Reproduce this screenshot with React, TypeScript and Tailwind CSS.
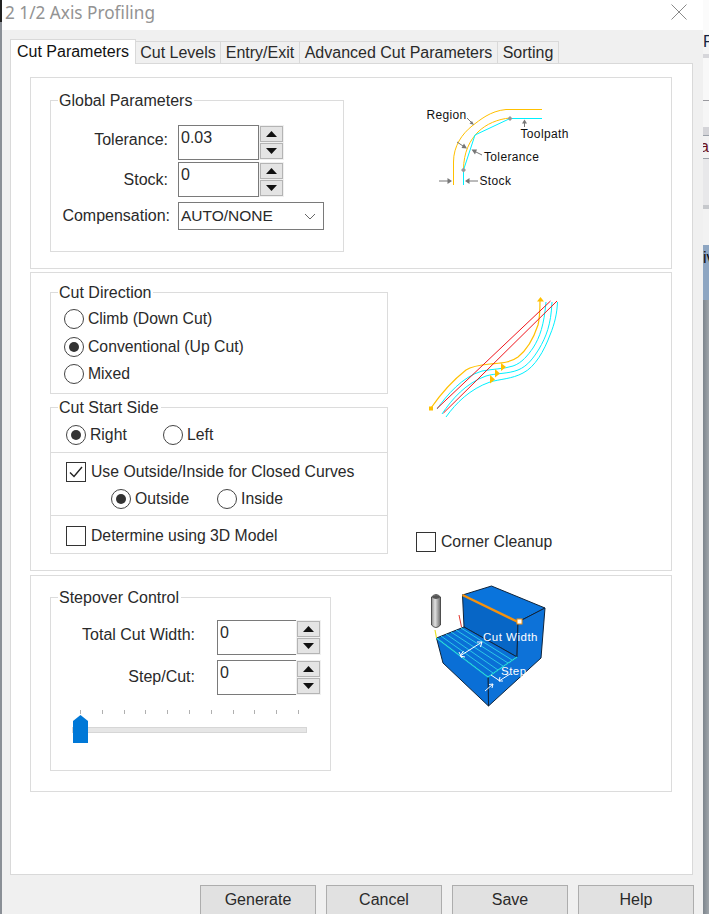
import React from "react";

const GroupBox = ({ title, className, children }: { title: string; className: string; children?: React.ReactNode }) => (
  <div className={"border border-[#dcdcdc] bg-white " + className}>
    <span className="-mt-[9px] ml-[7px] block h-[18px] w-fit bg-white pr-[2px] pl-px text-[16px] leading-[18px] text-[#2a2a2a]">{title}</span>
    {children}
  </div>
);

const Spinner = () => (
  <div className="flex flex-col gap-px bg-[#f0f0f0] p-px">
    <button className="flex h-[16px] w-[23px] items-center justify-center border border-[#b4b4b4] bg-[#e4e4e4]">
      <svg width="11" height="6" viewBox="0 0 11 6"><path d="M5.5 0 L11 6 H0 Z" fill="#111" /></svg>
    </button>
    <button className="flex h-[16px] w-[23px] items-center justify-center border border-[#b4b4b4] bg-[#e4e4e4]">
      <svg width="11" height="6" viewBox="0 0 11 6"><path d="M0 0 H11 L5.5 6 Z" fill="#111" /></svg>
    </button>
  </div>
);

const NumberField = ({ label, value, labelClass, gap, width, open }: { label: string; value: string; labelClass: string; gap: string; width: string; open?: boolean }) => (
  <div className="flex items-start">
    <span className={"text-right text-[16px] leading-[20px] text-[#2a2a2a] " + labelClass}>{label}</span>
    <div className={"h-[35px] border border-[#7a7a7a] bg-white pt-[3px] pl-[2px] text-[16px] leading-[18px] text-[#2a2a2a] " + gap + " " + width + (open ? " border-r-0" : "")}>{value}</div>
    <Spinner />
  </div>
);

const Radio = ({ checked, label, className }: { checked?: boolean; label: string; className?: string }) => (
  <label className={"flex items-center gap-[4px] text-[15.75px] leading-[20px] text-[#2a2a2a] " + (className ?? "")}>
    <span className="flex h-[20px] w-[20px] items-center justify-center rounded-full border border-[#444] bg-white">
      {checked && <span className="h-[10px] w-[10px] rounded-full bg-[#333]" />}
    </span>
    {label}
  </label>
);

const Checkbox = ({ checked, label, className }: { checked?: boolean; label: string; className?: string }) => (
  <label className={"flex items-center gap-[5px] text-[15.75px] leading-[20px] text-[#2a2a2a] " + (className ?? "")}>
    <span className="flex h-[20px] w-[20px] items-center justify-center border border-[#333] bg-white">
      {checked && (
        <svg width="14" height="12" viewBox="0 0 14 12"><path d="M1 6.5 L5 10.5 L13 1" fill="none" stroke="#222" strokeWidth="1.4" /></svg>
      )}
    </span>
    {label}
  </label>
);

const RegionDiagram = () => (
  <svg width="180" height="110" viewBox="0 0 180 110" className="shrink-0">
    <path d="M53.5 95 V72 C53.5 56 62 44 72 36 C80 30 90 21 106 19.5 H142" fill="none" stroke="#ffc000" strokeWidth="1" />
    <path d="M63.5 95 V80 C63.5 62 70 50 78 42 C86 34 98 29 110 28" fill="none" stroke="#ffc000" strokeWidth="1" />
    <path d="M63.5 95 V80 L75 45 L110 28.5 H142" fill="none" stroke="#00f0ff" strokeWidth="1" />
    <path d="M63.5 77.5 L66 80 L63.5 82.5 L61 80 Z M110 26 L112.5 28.5 L110 31 L107.5 28.5 Z" fill="#999" />
    <g fill="none" stroke="#777" strokeWidth="1">
      <path d="M67 28 L71 32" />
      <path d="M57 52 L63 56" />
      <path d="M82 65 L76 62" />
      <path d="M39 91 H48" />
      <path d="M78 91 H68" />
      <path d="M124.5 37 V33" />
    </g>
    <path d="M74 35 L69.5 33.5 L72 31 Z M67 58.5 L61.5 58 L64 53.5 Z M71.5 59.5 L77 59.5 L75 64.5 Z M52 91 L47.5 88 V94 Z M65 91 L69.5 88 V94 Z M124.5 29.5 L122 33.5 H127 Z" fill="#777" />
    <g fill="#111" fontSize="12" fontFamily="Liberation Sans, sans-serif" letterSpacing="0.35">
      <text x="26.5" y="29">Region</text>
      <text x="120.5" y="48">Toolpath</text>
      <text x="84" y="71">Tolerance</text>
      <text x="79.5" y="95">Stock</text>
    </g>
  </svg>
);

const DirectionDiagram = () => (
  <svg width="170" height="135" viewBox="0 0 170 135" className="shrink-0">
    <g fill="none" stroke="#00f0ff" strokeWidth="1">
      <path d="M27 124 C37 110 52 92 72 86 C82 84 94 84 103 81 C112 78 118 70 123 63 C130 52 134 40 136 17" />
      <path d="M32 129 C42 114 56 98 76 91 C86 88 98 89 108 85 C118 81 124 72 129 64 C136 52 141 40 142 17" />
      <path d="M36 132 C46 118 60 104 80 97 C90 94 102 94 113 88 C125 82 134 66 140 50 C145 38 147 28 147.5 17" />
    </g>
    <path d="M21 123 C30 110 42 96 56 85 C62 81 70 80 80 79 C90 78 100 78 108 72 C118 64 124 52 128 40 C130 32 130 25 130 15" fill="none" stroke="#ffc000" strokeWidth="1.2" />
    <path d="M27 123.5 L140.5 16 M33.5 128 L147 16" fill="none" stroke="#f0141b" strokeWidth="1" />
    <path d="M127 16.5 L130.5 12 L134 16.5 Z M91 78 L96 82 L91 86 Z M85 84 L90 88.5 L85 92.5 Z M80 90 L85 94.5 L80 98.5 Z" fill="#ffc000" />
    <rect x="19" y="121.5" width="4" height="4" fill="#ffc000" />
  </svg>
);

const StepDiagram = () => (
  <svg width="145" height="135" viewBox="0 0 145 135" className="shrink-0">
    <g stroke="#10243a" strokeWidth="1" strokeLinejoin="round">
      <path d="M47.5 15 L76.5 6 L130 28 L103 42 Z" fill="#0a74dc" />
      <path d="M47.5 15 L103 42 L102 77 L49 47 Z" fill="#0766c6" />
      <path d="M103 42 L130 28 L126 78 L73.5 126 L73 97 L102 77 Z" fill="#0d72d8" />
      <path d="M21.5 58 L49 47 L102 77 L73 97 Z" fill="#0a6fd6" />
      <path d="M21.5 58 L73 97 L73.5 126 L28 83 Z" fill="#0a6fd6" />
    </g>
    <path d="M21.5 58 L73 97 L102 77" fill="none" stroke="#25dcea" strokeWidth="1.2" />
    <g stroke="#2bc8e6" strokeWidth="1" fill="none">
      <path d="M26 56 L78 93 M31 54 L83 90 M36 52 L88 86 M41 50 L93 83 M46 48 L97 80" />
    </g>
    <path d="M47.5 15 L103 42" stroke="#f5920f" strokeWidth="2.5" />
    <rect x="102" y="39" width="5" height="5" fill="#fff" stroke="#f5920f" />
    <path d="M44 35 L46.5 47" stroke="#e2382f" strokeWidth="1" />
    <path d="M20 50 L21.5 58" stroke="#e8e020" strokeWidth="1.2" />
    <defs>
      <linearGradient id="tool" x1="0" x2="1" y1="0" y2="0">
        <stop offset="0" stopColor="#8c8c8c" />
        <stop offset="0.4" stopColor="#e2e2e2" />
        <stop offset="1" stopColor="#6a6a6a" />
      </linearGradient>
    </defs>
    <path d="M16.5 17 Q21 12 25.5 17 V45 Q21 50 16.5 45 Z" fill="url(#tool)" stroke="#333" strokeWidth="0.8" />
    <path d="M16.5 17 Q21 21 25.5 17 Q21 13 16.5 17 Z" fill="#555" />
    <g stroke="#fff" strokeWidth="1" fill="none">
      <path d="M45 76 L67 62 M48.5 71 L45 76 L50 77 M62 62 L67 62 L65.5 67" />
      <path d="M44 72 L47 78" />
      <path d="M70 111 L78 104 M74 104.5 L78 104 L77 108" />
      <path d="M84 101 L95 94 M88 101 L84 101 L85 97" />
      <path d="M76 95 L85 101" />
    </g>
    <g fill="#fff" fontSize="11.5" fontFamily="Liberation Sans, sans-serif" letterSpacing="0.5">
      <text x="68" y="61">Cut Width</text>
      <text x="86" y="95">Step</text>
    </g>
  </svg>
);

const tabs = [
  { label: "Cut Levels", width: "w-[85px]" },
  { label: "Entry/Exit", width: "w-[79px]" },
  { label: "Advanced Cut Parameters", width: "w-[198px]" },
  { label: "Sorting", width: "w-[61px]" },
];

const ticks = Array.from({ length: 11 }, (_, i) => i);

const BehindWindow = () => (
  <div className="flex w-[6px] shrink-0 flex-col overflow-hidden bg-gradient-to-r from-[#7d858d] to-[#a0a6ab] text-[16px] leading-[16px] whitespace-nowrap text-[#111]">
    <div className="h-[34px] shrink-0 bg-[#fbfbfb]" />
    <div className="h-[20px] shrink-0 bg-[#f4f4f4] text-[#15233f]">F</div>
    <div className="h-[4px] shrink-0 bg-[#d6d6da]" />
    <div className="h-[42px] shrink-0 bg-[#f8f8f8]" />
    <div className="h-[1px] shrink-0 bg-[#9a9a9f]" />
    <div className="h-[26px] shrink-0 bg-[#f6f6f6]" />
    <div className="h-[8px] shrink-0 bg-[#d4d4d8]" />
    <div className="h-[1px] shrink-0 bg-[#9aa0a8]" />
    <div className="h-[22px] shrink-0 overflow-hidden bg-[#f2f2f2] pt-[3px] text-[#6a1020]"><span className="-ml-[3px]">ar</span></div>
    <div className="h-[1px] shrink-0 bg-[#9aa0a8]" />
    <div className="h-[46px] shrink-0 bg-[#e8e8ea]" />
    <div className="h-[4px] shrink-0 bg-[#c6c8cc]" />
    <div className="h-[36px] shrink-0 bg-[#f2f2f2]" />
    <div className="h-[55px] shrink-0 bg-[#8ea6c2] pt-[5px]">iv</div>
  </div>
);

export default function App() {
  return (
    <div className="flex h-[914px] w-[709px] overflow-hidden bg-white font-['Liberation_Sans',sans-serif]">
      <div className="w-[2px] shrink-0 bg-[#8a8f96]">
        <div className="h-[22px] bg-[#222]" />
      </div>
      <div className="flex w-[701px] shrink-0 flex-col bg-[#f0f0f0]">
        <div className="flex h-[30px] shrink-0 items-center justify-between bg-white pr-[16px] pl-[3px]">
          <span className="-mt-[4px] font-['Noto_Sans',sans-serif] text-[17.2px] leading-[24px] text-[#939393]">2 1/2 Axis Profiling</span>
          <svg width="16" height="16" viewBox="0 0 16 16" className="-mt-[6px]"><path d="M0.5 0.5 L15.5 15.5 M15.5 0.5 L0.5 15.5" stroke="#8a8a8a" strokeWidth="1" /></svg>
        </div>

        <div className="flex h-[33px] shrink-0 items-end pl-[8px] text-[16px] text-[#2a2a2a]">
          <div className="relative z-10 -mb-px flex h-[25px] w-[126px] items-center justify-center border border-b-0 border-[#d9d9d9] bg-white text-[#111]">Cut Parameters</div>
          {tabs.map((t) => (
            <div key={t.label} className={"flex h-[22px] items-center justify-center border border-b-0 border-l-0 border-[#d9d9d9] " + t.width}>{t.label}</div>
          ))}
        </div>

        <div className="ml-[8px] flex h-[812px] w-[683px] shrink-0 flex-col gap-[3px] border border-[#d9d9d9] bg-white pt-[13px] pr-[20px] pl-[19px]">
          <section className="flex h-[192px] shrink-0 items-start border border-[#dcdcdc] pt-[12px] pl-[19px]">
            <GroupBox title="Global Parameters" className="mt-[10px] h-[152px] w-[294px]">
              <div className="mt-[15px] flex flex-col gap-[2px]">
                <NumberField label="Tolerance:" value="0.03" labelClass="w-[117px] pt-[5px]" gap="ml-[10px]" width="w-[81px]" />
                <NumberField label="Stock:" value="0" labelClass="w-[117px] pt-[8px]" gap="ml-[10px]" width="w-[81px]" />
              </div>
              <div className="mt-[5px] flex items-center">
                <span className="w-[119px] text-right text-[16px] text-[#2a2a2a]">Compensation:</span>
                <div className="ml-[8px] flex h-[28px] w-[146px] items-center justify-between border border-[#7a7a7a] pr-[7px] pl-[2px] text-[15.5px] text-[#2a2a2a]">
                  AUTO/NONE
                  <svg width="12" height="7" viewBox="0 0 12 7"><path d="M1 1 L6 6 L11 1" fill="none" stroke="#666" strokeWidth="1" /></svg>
                </div>
              </div>
            </GroupBox>
            <div className="ml-[56px]"><RegionDiagram /></div>
          </section>

          <section className="flex h-[299px] shrink-0 items-start border border-[#dcdcdc] pt-[12px] pl-[19px]">
            <div className="mt-[7px] flex flex-col">
              <GroupBox title="Cut Direction" className="h-[102px] w-[338px]">
                <div className="flex flex-col pt-[3px] pl-[13px]">
                  <Radio label="Climb (Down Cut)" className="h-[28px]" />
                  <Radio checked label="Conventional (Up Cut)" className="h-[27px]" />
                  <Radio label="Mixed" className="h-[28px]" />
                </div>
              </GroupBox>
              <GroupBox title="Cut Start Side" className="mt-[13px] h-[147px] w-[338px]">
                <div className="flex h-[36px] items-center border-b border-[#dcdcdc] pl-[15px]">
                  <Radio checked label="Right" className="w-[97px]" />
                  <Radio label="Left" />
                </div>
                <div className="h-[63px] border-b border-[#dcdcdc] pt-[9px] pl-[15px]">
                  <Checkbox checked label="Use Outside/Inside for Closed Curves" />
                  <div className="mt-[7px] flex pl-[45px]">
                    <Radio checked label="Outside" className="w-[106px]" />
                    <Radio label="Inside" />
                  </div>
                </div>
                <div className="pt-[10px] pl-[15px]">
                  <Checkbox label="Determine using 3D Model" />
                </div>
              </GroupBox>
            </div>
            <div className="ml-[22px] flex flex-col">
              <DirectionDiagram />
              <Checkbox label="Corner Cleanup" className="mt-[112px] ml-[6px]" />
            </div>
          </section>

          <section className="mt-px flex h-[217px] shrink-0 items-start border border-[#dcdcdc] pt-[4px] pl-[19px]">
            <GroupBox title="Stepover Control" className="mt-[17px] h-[174px] w-[281px]">
              <div className="mt-[13px] flex flex-col gap-[5px]">
                <NumberField label="Total Cut Width:" value="0" labelClass="w-[144px] pt-[5px]" gap="ml-[22px]" width="w-[79px]" open />
                <NumberField label="Step/Cut:" value="0" labelClass="w-[144px] pt-[7px]" gap="ml-[22px]" width="w-[79px]" open />
              </div>
              <div className="mt-[15px] ml-[29px] flex w-[219px] justify-between">
                {ticks.map((i) => (
                  <span key={i} className="h-[4px] w-px bg-[#b0b0b0]" />
                ))}
              </div>
              <div className="relative mt-[13px] ml-[21px] h-[6px] w-[235px] border border-[#d6d6d6] bg-[#e6e6e6]">
                <svg width="15" height="28" viewBox="0 0 15 28" className="absolute -top-[13px] left-0">
                  <path d="M7.5 0 L15 6 V28 H0 V6 Z" fill="#0078d7" />
                </svg>
              </div>
            </GroupBox>
            <div className="ml-[84px]"><StepDiagram /></div>
          </section>
        </div>

        <div className="mt-[10px] flex shrink-0 justify-end gap-[10px] pr-[9px]">
          {["Generate", "Cancel", "Save", "Help"].map((b) => (
            <button key={b} className="h-[40px] w-[116px] shrink-0 border border-[#adadad] bg-[#e1e1e1] pb-[10px] text-[16px] text-[#2a2a2a]">{b}</button>
          ))}
        </div>
      </div>
      <BehindWindow />
    </div>
  );
}
